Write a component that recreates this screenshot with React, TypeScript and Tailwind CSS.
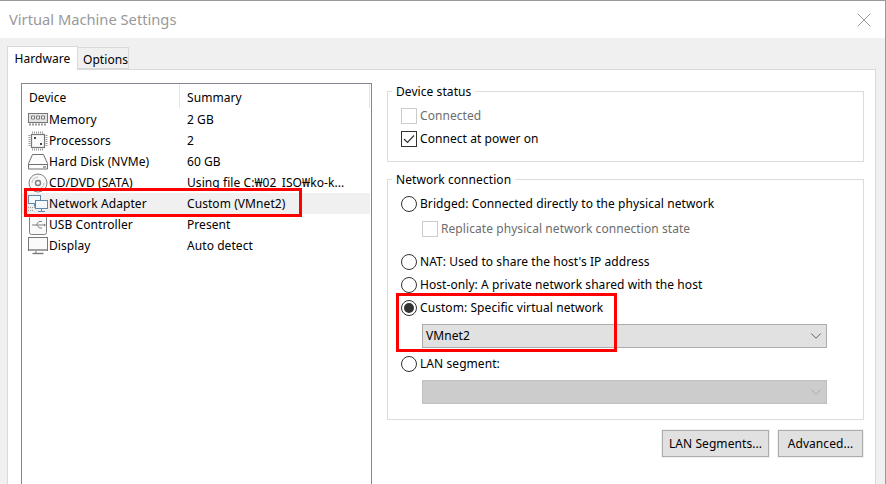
import { ChevronDown, X } from "lucide-react";
import type { ReactNode } from "react";

function MemoryIcon() {
  return (
    <svg width="20" height="13" viewBox="0 0 20 13" fill="none" stroke="#777777">
      <rect x="0.5" y="0.5" width="19" height="9" fill="#e4e4e4" />
      <path d="M3.5 3h3v3h-3zM8.5 3h3v3h-3zM13.5 3h3v3h-3z" fill="#f8f8f8" />
      <path d="M1 11.5h18" strokeDasharray="2 1" strokeWidth="2" stroke="#999999" />
    </svg>
  );
}

function CpuIcon() {
  return (
    <svg width="20" height="20" viewBox="0 0 20 20" fill="none" stroke="#777777">
      <rect x="3.5" y="3.5" width="13" height="13" fill="#fafafa" strokeWidth="1.2" />
      <path d="M4 1.5h12M4 18.5h12M1.5 4v12M18.5 4v12" strokeWidth="2" strokeDasharray="1 1" stroke="#999999" />
      <path d="M6 6h2v2H6zM12 12h2v2h-2z" fill="#444444" stroke="none" />
    </svg>
  );
}

function DiskIcon() {
  return (
    <svg width="20" height="16" viewBox="0 0 20 16" fill="none" stroke="#707070">
      <path d="M4.5 0.5h11l4 9v5.5H0.5V9.5z" fill="#fcfcfc" />
      <path d="M0.5 10.5h19" />
      <path d="M15 13h3" stroke="#555555" />
    </svg>
  );
}

function CdIcon() {
  return (
    <svg width="20" height="20" viewBox="0 0 20 20" fill="none" stroke="#808080">
      <circle cx="10" cy="10" r="9" fill="#f7f7f7" />
      <circle cx="10" cy="10" r="2.5" strokeWidth="1.4" />
      <path d="M4 10a6 6 0 0 1 6-6M16 10a6 6 0 0 1-6 6" stroke="#bbbbbb" />
    </svg>
  );
}

function NetworkIcon() {
  return (
    <svg width="20" height="18" viewBox="0 0 20 18" fill="none" stroke="#5f88a8">
      <rect x="0.5" y="0.5" width="12" height="8" fill="#f4f8fb" />
      <path d="M6.5 8.5v3" />
      <rect x="7.5" y="5.5" width="12" height="8" fill="#f4f8fb" />
      <path d="M13.5 13.5v3M10 16.5h7" />
      <path d="M0 12.5h7M0 15.5h6" stroke="#999999" strokeDasharray="1 1" />
    </svg>
  );
}

function UsbIcon() {
  return (
    <svg width="18" height="20" viewBox="0 0 18 20" fill="none" stroke="#808080">
      <rect x="0.5" y="0.5" width="17" height="19" rx="2" fill="#fafafa" />
      <path d="M3 10h12M7 10l3-3.5h3M8 10l2.5 3h2.5" />
      <path d="M15 8.5v3l2-1.5z" fill="#808080" stroke="none" />
    </svg>
  );
}

function DisplayIcon() {
  return (
    <svg width="20" height="18" viewBox="0 0 20 18" fill="none" stroke="#777777">
      <rect x="0.5" y="0.5" width="19" height="13" fill="#fafafa" />
      <path d="M1 13h18" strokeWidth="2" stroke="#a0a0a0" />
      <path d="M8 14v2" />
      <path d="M4.5 16.5h11" strokeWidth="1.4" />
    </svg>
  );
}

const devices = [
  { icon: <MemoryIcon />, name: "Memory", summary: "2 GB" },
  { icon: <CpuIcon />, name: "Processors", summary: "2" },
  { icon: <DiskIcon />, name: "Hard Disk (NVMe)", summary: "60 GB" },
  { icon: <CdIcon />, name: "CD/DVD (SATA)", summary: "Using file C:₩02_ISO₩ko-k..." },
  { icon: <NetworkIcon />, name: "Network Adapter", summary: "Custom (VMnet2)", selected: true },
  { icon: <UsbIcon />, name: "USB Controller", summary: "Present" },
  { icon: <DisplayIcon />, name: "Display", summary: "Auto detect" },
];

function DeviceList() {
  return (
    <div className="relative h-[420px] w-[351px] shrink-0 border border-[#828790] border-b-0 bg-white">
      <div className="flex h-[24px] items-start text-black">
        <div className="h-[24px] w-[158px] border-r border-[#e5e5e5] pl-[7px] pt-[2px] leading-[24px]">Device</div>
        <div className="h-[24px] w-[190px] border-r border-[#e5e5e5] pl-[7px] pt-[2px] leading-[24px]">Summary</div>
      </div>
      <div className="mt-[1px] flex flex-col">
        {devices.map((d) => (
          <div
            key={d.name}
            className={`flex h-[21px] items-center ${d.selected ? "mr-[1px] bg-[#f0f0f0]" : ""}`}
          >
            <div className="flex w-[27px] shrink-0 justify-end pr-[1px]">
              <div className="flex h-[21px] w-[20px] items-center justify-center">{d.icon}</div>
            </div>
            <div className="w-[138px] whitespace-nowrap">{d.name}</div>
            <div className="whitespace-nowrap">{d.summary}</div>
          </div>
        ))}
      </div>
      <div className="pointer-events-none absolute left-[2px] top-[104px] h-[29px] w-[278px] border-[3px] border-[#ff0000]" />
    </div>
  );
}

function Group({ title, className, children }: { title: string; className: string; children: ReactNode }) {
  return (
    <div className={`relative border border-[#dcdcdc] ${className}`}>
      <span className="absolute -top-[8px] left-[4px] bg-white px-[4px] leading-[16px]">{title}</span>
      {children}
    </div>
  );
}

function Check({ checked, disabled, label }: { checked?: boolean; disabled?: boolean; label: string }) {
  return (
    <div className={`flex h-[23px] items-center gap-[3px] ${disabled ? "text-[#6d6d6d]" : ""}`}>
      <div className={`flex h-[16px] w-[16px] items-center justify-center border bg-white ${disabled ? "border-[#cccccc]" : "border-[#333333]"}`}>
        {checked && (
          <svg width="12" height="10" viewBox="0 0 12 10" fill="none" stroke="#333333" strokeWidth="1.2">
            <path d="M1 5l3.5 3.5L11 1.5" />
          </svg>
        )}
      </div>
      <span>{label}</span>
    </div>
  );
}

function Radio({ checked, label }: { checked?: boolean; label: string }) {
  return (
    <div className="flex h-[23px] items-center gap-[3px]">
      <div className="flex h-[16px] w-[16px] items-center justify-center rounded-full border border-[#333333] bg-white">
        {checked && <div className="h-[10px] w-[10px] rounded-full bg-[#333333]" />}
      </div>
      <span>{label}</span>
    </div>
  );
}

function Select({ value, disabled }: { value?: string; disabled?: boolean }) {
  return (
    <div className={`ml-[21px] flex h-[24px] w-[405px] items-center justify-between border pl-[3px] pr-[1px] ${disabled ? "border-[#c0c0c0] bg-[#cccccc]" : "border-[#adadad] bg-[#e1e1e1]"}`}>
      <span>{value}</span>
      <ChevronDown size={18} strokeWidth={0.9} color={disabled ? "#a0a0a0" : "#222222"} />
    </div>
  );
}

function Settings() {
  return (
    <div className="flex w-[477px] flex-col pt-[8px]">
      <Group title="Device status" className="h-[71px] pl-[13px] pt-[12px]">
        <Check disabled label="Connected" />
        <Check checked label="Connect at power on" />
      </Group>
      <Group title="Network connection" className="relative mt-[17px] h-[241px] pl-[13px] pt-[12px]">
        <Radio label="Bridged: Connected directly to the physical network" />
        <div className="ml-[21px] mt-[2px]">
          <Check disabled label="Replicate physical network connection state" />
        </div>
        <div className="mt-[10px]">
          <Radio label="NAT: Used to share the host's IP address" />
        </div>
        <Radio label="Host-only: A private network shared with the host" />
        <Radio checked label="Custom: Specific virtual network" />
        <div className="mt-[5px]">
          <Select value="VMnet2" />
        </div>
        <div className="mt-[4px]">
          <Radio label="LAN segment:" />
        </div>
        <div className="mt-[5px]">
          <Select disabled />
        </div>
        <div className="pointer-events-none absolute left-[8px] top-[113px] h-[59px] w-[221px] border-[3px] border-[#ff0000]" />
      </Group>
      <div className="mr-[1px] mt-[10px] flex justify-end gap-[9px]">
        <button className="h-[27px] w-[107px] border border-[#adadad] bg-[#e1e1e1] outline outline-[#f0f0f0]">LAN Segments...</button>
        <button className="h-[27px] w-[85px] border border-[#adadad] bg-[#e1e1e1] outline outline-[#f0f0f0]">Advanced...</button>
      </div>
    </div>
  );
}

export default function App() {
  return (
    <div className="flex h-[484px] w-[886px] flex-col overflow-hidden border-r border-t border-[#999999] bg-[#f0f0f0] font-['Noto_Sans',sans-serif] text-[12px] tracking-[0.07px] text-black">
      <div className="flex h-[37px] shrink-0 items-center justify-between bg-white pl-[9px] pr-[9px]">
        <span className="text-[14.7px] tracking-normal text-[#999999]">Virtual Machine Settings</span>
        <X size={24} strokeWidth={0.7} color="#707070" />
      </div>
      <div className="flex flex-1 flex-col pl-[7px] pr-[9px] pt-[8px]">
        <div className="relative z-10 flex items-end">
          <div className="-mb-[1px] flex h-[24px] w-[71px] items-center justify-center border border-b-0 border-[#d9d9d9] bg-white">Hardware</div>
          <div className="flex h-[22px] w-[51px] items-center justify-center border border-l-0 border-[#d9d9d9] pl-[5px] pt-[3px]">Options</div>
        </div>
        <div className="flex flex-1 gap-[15px] border border-[#d9d9d9] bg-white pl-[13px] pt-[13px]">
          <DeviceList />
          <Settings />
        </div>
      </div>
    </div>
  );
}
